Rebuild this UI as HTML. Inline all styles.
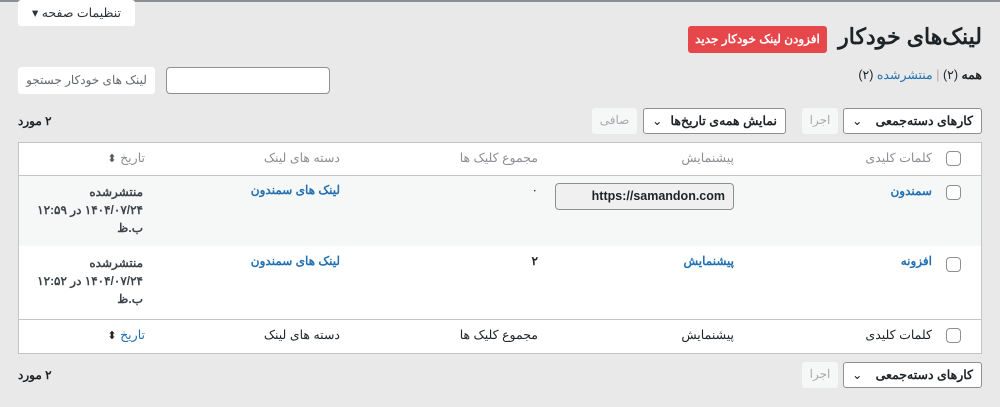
<!DOCTYPE html>
<html dir="rtl"><head><meta charset="utf-8">
<style>
*{box-sizing:border-box;margin:0;padding:0}
body{width:1000px;height:407px;background:#e9e9e9;font-family:"Liberation Sans","Noto Sans CJK SC",sans-serif;font-size:12px;color:#1d2327;position:relative;overflow:hidden}
.a{position:absolute;white-space:nowrap}
.topline{left:0;top:0;width:1000px;height:2px;background:#8c8f94}
.btnw{background:#fff;border-radius:3px;color:#2c3338}
.sel{background:#fff;border:1px solid #8c8f94;border-radius:3px;font-weight:bold;font-size:12.5px;color:#1d2327;padding:0 8px;line-height:24px}
.dis{background:#f6f7f7;border-radius:3px;color:#a7aaad;text-align:center;line-height:24px}
.link{color:#2271b1}
.cb{width:15px;height:15px;border:1px solid #8c8f94;border-radius:4px;background:#fff}
.hd{color:#8c8f94;font-size:12.5px}
.fd{color:#1d2327;font-size:12.5px}
.ar{font-size:11px;color:#50575e}
</style></head><body>
<div class="a topline"></div>
<div class="a btnw" style="left:18px;top:0;width:117px;height:26px;text-align:center;line-height:26px;font-size:12.5px">تنظیمات صفحه ▾</div>

<div class="a" style="right:18px;top:24px;font-size:22px;font-weight:bold;color:#1d2327">لینک‌های خودکار</div>
<div class="a" style="left:688px;top:26px;width:139px;height:27px;background:#e6474a;border-radius:3px;color:#fff;font-weight:bold;font-size:12px;text-align:center;line-height:27px">افزودن لینک خودکار جدید</div>

<div class="a" style="right:18px;top:67px;font-size:12.5px"><b>همه</b> (۲) <span style="color:#a7aaad">|</span> <span class="link">منتشرشده</span> (۲)</div>

<div class="a" style="left:166px;top:67px;width:164px;height:27px;background:#fff;border:1px solid #8c8f94;border-radius:4px"></div>
<div class="a btnw" style="left:18px;top:67px;width:137px;height:27px;text-align:center;line-height:27px;color:#646970">لینک های خودکار جستجو</div>

<div class="a sel" style="left:843px;top:108px;width:139px;height:26px">کارهای دسته‌جمعی <span style="float:left;font-weight:normal">⌄</span></div>
<div class="a dis" style="left:802px;top:108px;width:36px;height:26px">اجرا</div>
<div class="a sel" style="left:643px;top:108px;width:143px;height:26px">نمایش همه‌ی تاریخ‌ها <span style="float:left;font-weight:normal">⌄</span></div>
<div class="a dis" style="left:592px;top:108px;width:45px;height:26px">صافی</div>
<div class="a" style="left:18px;top:114px;font-weight:bold">۲ مورد</div>

<div class="a" style="left:18px;top:142px;width:964px;height:212px;background:#fff;border:1px solid #c3c4c7"></div>
<div class="a" style="left:19px;top:175px;width:962px;height:1px;background:#c3c4c7"></div>
<div class="a" style="left:19px;top:176px;width:962px;height:70px;background:#f6f7f7"></div>
<div class="a" style="left:19px;top:319px;width:962px;height:1px;background:#c3c4c7"></div>

<div class="a cb" style="left:946px;top:151px"></div>
<div class="a hd" style="right:68px;top:150px">کلمات کلیدی</div>
<div class="a hd" style="right:266px;top:150px">پیشنمایش</div>
<div class="a hd" style="right:462px;top:150px">مجموع کلیک ها</div>
<div class="a hd" style="right:660px;top:150px">دسته های لینک</div>
<div class="a hd" style="right:855px;top:150px">تاریخ <span class="ar">⬍</span></div>

<div class="a cb" style="left:946px;top:185px"></div>
<div class="a link" style="right:68px;top:184px;font-weight:bold">سمندون</div>
<div class="a" style="left:555px;top:183px;width:179px;height:27px;background:#f0f0f1;border:1px solid #8c8f94;border-radius:4px;direction:ltr;text-align:right;padding-right:8px;line-height:25px;font-weight:bold;font-size:12.5px">https://samandon.com</div>
<div class="a" style="right:462px;top:183px">۰</div>
<div class="a link" style="right:660px;top:183px;font-weight:bold">لینک های سمندون</div>
<div class="a" style="right:857px;top:183px;line-height:18px;font-weight:bold;color:#3c434a">منتشرشده<br>۱۴۰۴/۰۷/۲۴ در ۱۲:۵۹<br>ب.ظ</div>

<div class="a cb" style="left:946px;top:257px"></div>
<div class="a link" style="right:68px;top:254px;font-weight:bold">افزونه</div>
<div class="a link" style="right:266px;top:254px;font-weight:bold">پیشنمایش</div>
<div class="a" style="right:462px;top:254px;font-weight:bold">۲</div>
<div class="a link" style="right:660px;top:254px;font-weight:bold">لینک های سمندون</div>
<div class="a" style="right:857px;top:254px;line-height:18px;font-weight:bold;color:#3c434a">منتشرشده<br>۱۴۰۴/۰۷/۲۴ در ۱۲:۵۲<br>ب.ظ</div>

<div class="a cb" style="left:946px;top:328px"></div>
<div class="a fd" style="right:68px;top:327px">کلمات کلیدی</div>
<div class="a fd" style="right:266px;top:327px">پیشنمایش</div>
<div class="a fd" style="right:462px;top:327px">مجموع کلیک ها</div>
<div class="a fd" style="right:660px;top:327px">دسته های لینک</div>
<div class="a link" style="right:855px;top:327px;font-size:12.5px">تاریخ <span class="ar" style="color:#1d2327">⬍</span></div>

<div class="a sel" style="left:843px;top:362px;width:139px;height:26px">کارهای دسته‌جمعی <span style="float:left;font-weight:normal">⌄</span></div>
<div class="a dis" style="left:802px;top:362px;width:36px;height:26px">اجرا</div>
<div class="a" style="left:18px;top:368px;font-weight:bold">۲ مورد</div>
</body></html>
